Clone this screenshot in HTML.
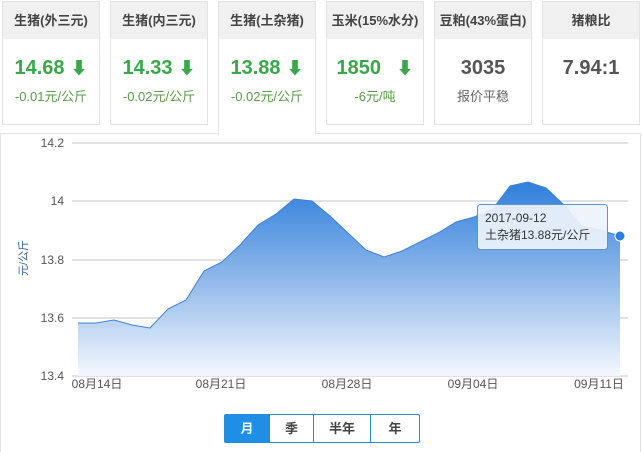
<!DOCTYPE html>
<html><head><meta charset="utf-8"><style>
*{margin:0;padding:0;box-sizing:border-box}
body{width:642px;height:452px;background:#fff;font-family:"Liberation Sans","Noto Sans CJK SC",sans-serif;position:relative;overflow:hidden}
.card{position:absolute;top:1px;width:98px;height:124px;border:1px solid #e3e3e3;background:#fff;text-align:center}
.card .h{height:37px;background:#f0f0f0;font-size:13px;font-weight:bold;color:#444;line-height:37px}
.card .v{margin-top:17px;font-size:20px;font-weight:bold;color:#3aa84a;height:24px;line-height:24px}
.card .v.g{color:#555}
.card .s{margin-top:6px;font-size:13px;color:#5a9a4a}
.card .s.g{color:#666}
.arr{display:inline-block;margin-left:6px;font-size:17px}
.act{height:134px;border-bottom:none;z-index:2}
.panel{position:absolute;left:0;top:133px;width:641px;height:319px;border:1px solid #e3e3e3;border-bottom:none}
.btns{position:absolute;left:224px;top:414px;display:flex;border:1px solid #2a8ad8;height:29px;border-radius:2px}
.btns div{font-size:13px;font-weight:bold;color:#444;line-height:27px;text-align:center;border-left:1px solid #2a8ad8}
.btns div:first-child{border-left:none;background:#1e8ee6;color:#fff}
</style></head><body>
<div class="card" style="left:2px"><div class="h">生猪(外三元)</div><div class="v">14.68<span class="arr">⬇</span></div><div class="s">-0.01元/公斤</div></div>
<div class="card" style="left:110px"><div class="h">生猪(内三元)</div><div class="v">14.33<span class="arr">⬇</span></div><div class="s">-0.02元/公斤</div></div>
<div class="card act" style="left:218px"><div class="h">生猪(土杂猪)</div><div class="v">13.88<span class="arr">⬇</span></div><div class="s">-0.02元/公斤</div></div>
<div class="card" style="left:326px"><div class="h">玉米(15%水分)</div><div class="v">1850 <span class="arr" style="margin-left:10px">⬇</span></div><div class="s">-6元/吨</div></div>
<div class="card" style="left:434px"><div class="h">豆粕(43%蛋白)</div><div class="v g">3035</div><div class="s g">报价平稳</div></div>
<div class="card" style="left:542px"><div class="h">猪粮比</div><div class="v g">7.94:1</div></div>
<div class="panel"></div>
<svg style="position:absolute;left:0;top:0" width="642" height="452">
<defs><linearGradient id="gr" x1="0" y1="0" x2="0" y2="1"><stop offset="0" stop-color="#2f7fdc"/><stop offset="0.5" stop-color="#8fb8ea"/><stop offset="1" stop-color="#f4f8fd"/></linearGradient></defs>
<g stroke="#d8d8d8" stroke-width="1.5">
<line x1="72" y1="143" x2="628" y2="143"/><line x1="72" y1="201" x2="628" y2="201"/><line x1="72" y1="260" x2="628" y2="260"/><line x1="72" y1="318" x2="628" y2="318"/><line x1="72" y1="376" x2="628" y2="376"/></g>
<path d="M78,323 L96,323 114,320 132,325 150,328 168,309 186,300 204,271 222,262 240,245 258,225 276,214 294,199 312,201 330,216 348,233 366,250 384,257 402,251 420,242 438,233 456,222 474,217 492,210 510,186 528,182 546,188 564,205 582,226 600,230 620,236 L620,376 L78,376Z" fill="url(#gr)"/>
<path d="M78,323 L96,323 114,320 132,325 150,328 168,309 186,300 204,271 222,262 240,245 258,225 276,214 294,199 312,201 330,216 348,233 366,250 384,257 402,251 420,242 438,233 456,222 474,217 492,210 510,186 528,182 546,188 564,205 582,226 600,230 620,236" fill="none" stroke="#3f82d6" stroke-width="1"/>
<circle cx="620" cy="236" r="5" fill="#2a7fdc" stroke="#fff" stroke-width="1"/>
<g font-size="12" fill="#555" text-anchor="end" font-family="Liberation Sans,sans-serif">
<text x="64" y="147">14.2</text><text x="64" y="205">14</text><text x="64" y="264">13.8</text><text x="64" y="322">13.6</text><text x="64" y="380">13.4</text></g>
<g font-size="12" fill="#555" text-anchor="middle">
<text x="97" y="388">08月14日</text><text x="221" y="388">08月21日</text><text x="347" y="388">08月28日</text><text x="473" y="388">09月04日</text><text x="599" y="388">09月11日</text></g>
<text transform="translate(27,258) rotate(-90)" font-size="11" fill="#3a6a9a" text-anchor="middle">元/公斤</text>
<rect x="477.5" y="204.5" width="130" height="45" rx="3" fill="#eef3fb" fill-opacity="0.92" stroke="#5b93d8"/>
<text x="485" y="222" font-size="12" fill="#333">2017-09-12</text>
<text x="485" y="239" font-size="12" fill="#333">土杂猪13.88元/公斤</text>
</svg>
<div class="btns"><div style="width:44px">月</div><div style="width:44px">季</div><div style="width:57px">半年</div><div style="width:49px">年</div></div>
</body></html>
